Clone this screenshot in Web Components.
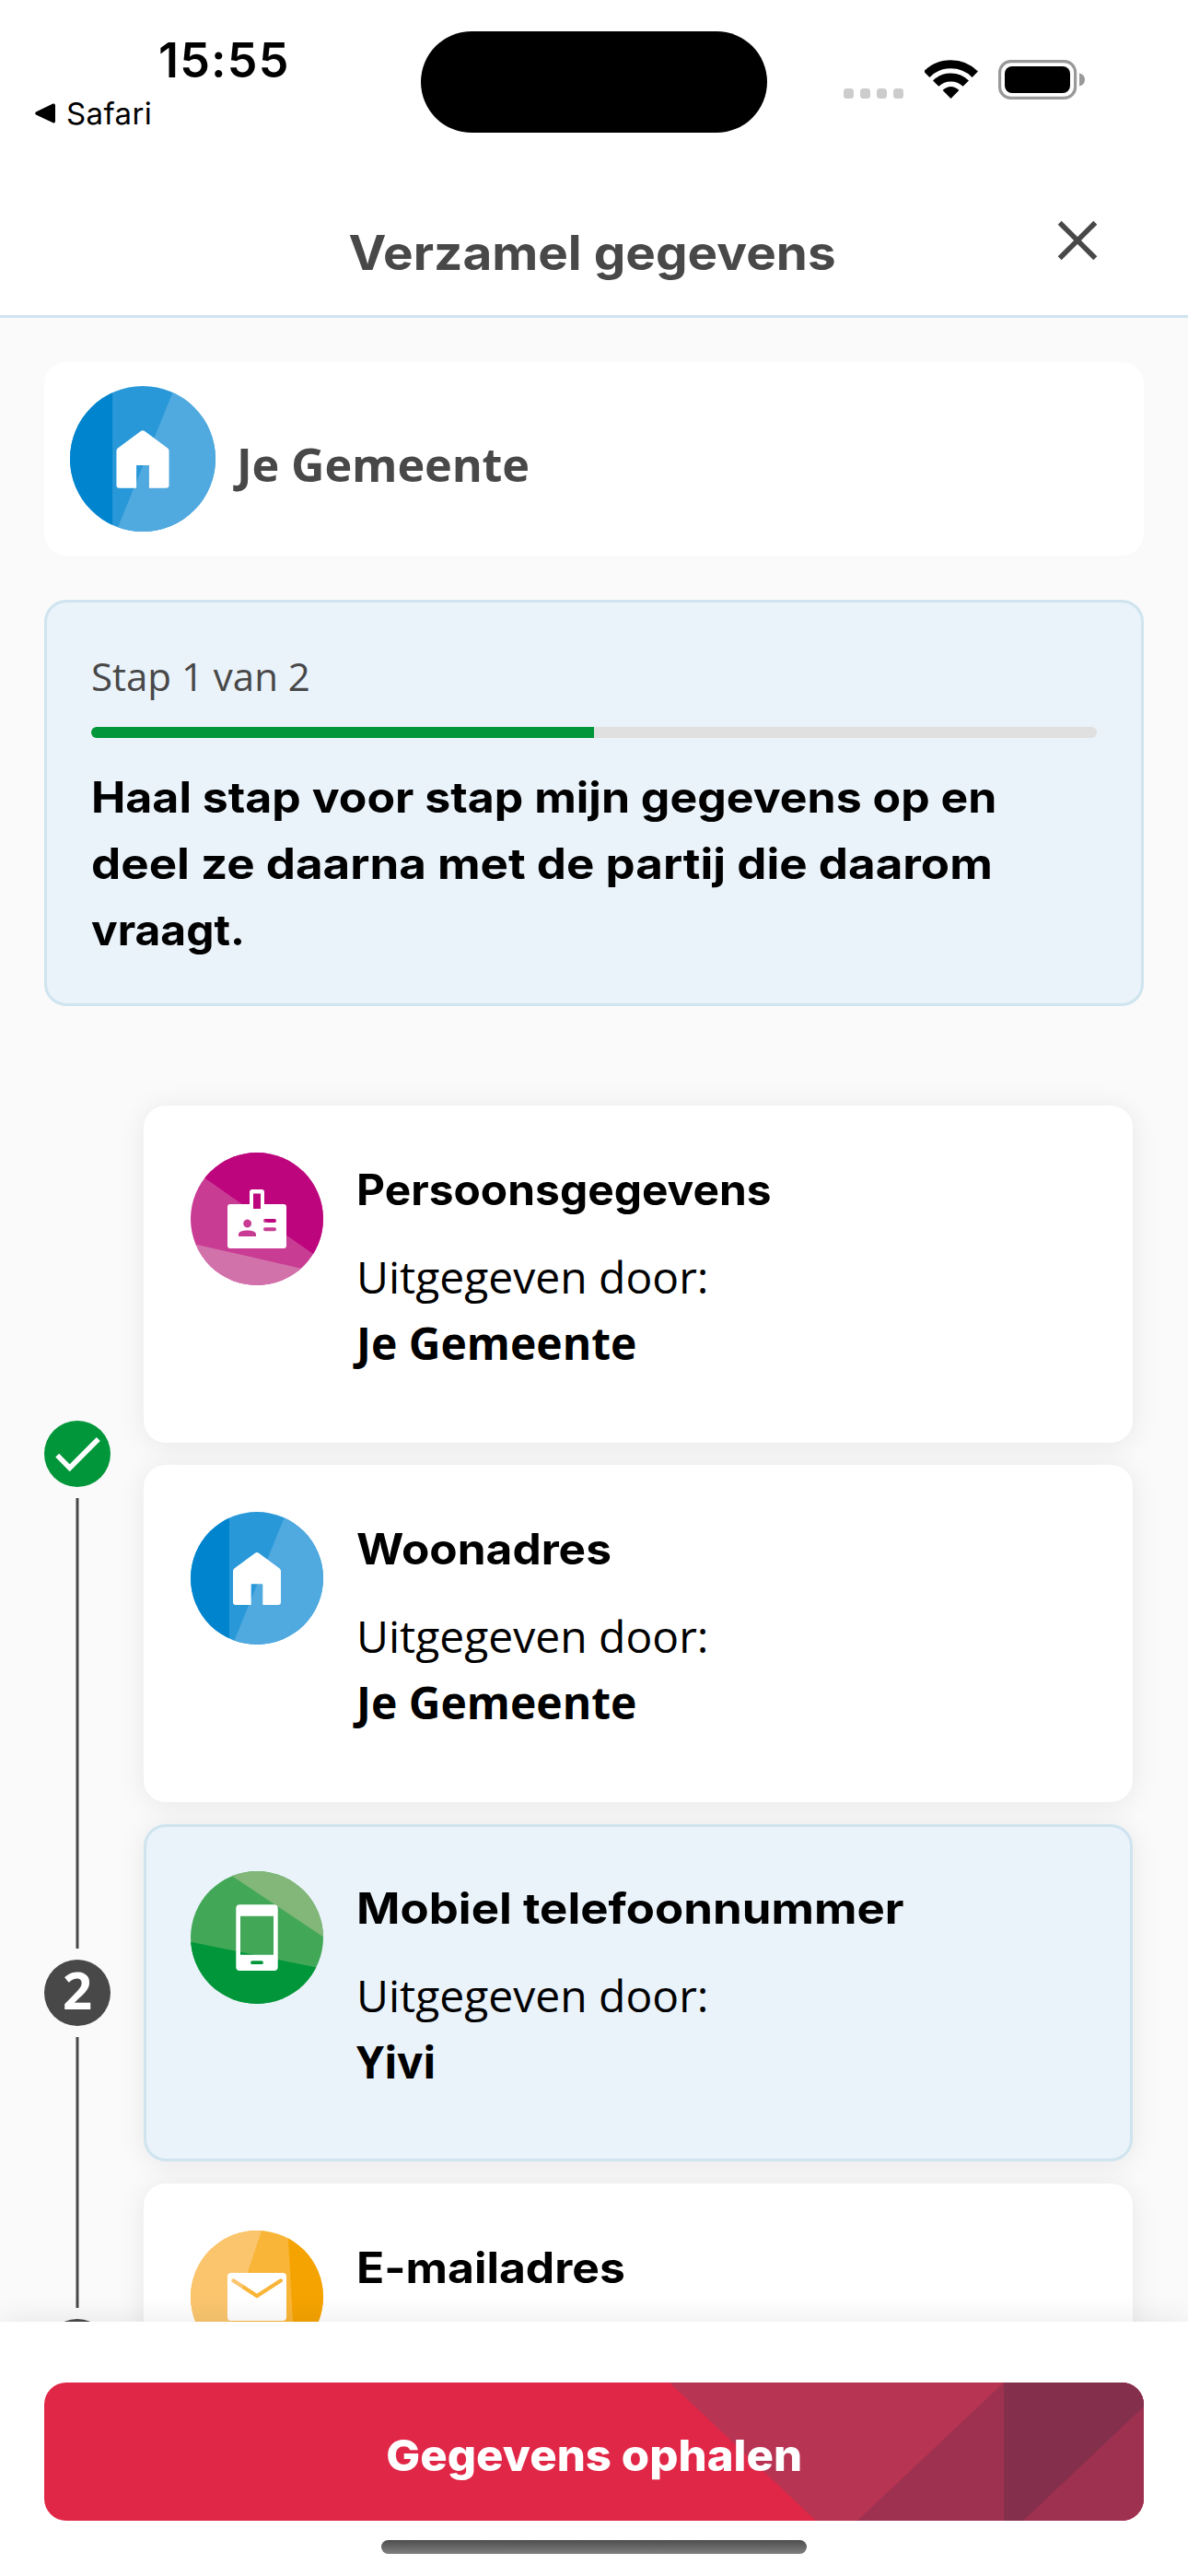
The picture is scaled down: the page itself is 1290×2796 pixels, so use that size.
<!DOCTYPE html>
<html lang="nl">
<head>
<meta charset="utf-8">
<title>Verzamel gegevens</title>
<style>
body { margin: 0; background: #fafafa; }
</style>
</head>
<body>
<yivi-screen>
  <status-bar slot="top" time="15:55" back="Safari"></status-bar>
  <nav-header slot="top">Verzamel gegevens</nav-header>
  <requestor-card>Je Gemeente</requestor-card>
  <progress-panel label="Stap 1 van 2" value="50">
    <span style="transform:scaleX(1.075)">Haal stap voor stap mijn gegevens op en</span>
    <span style="transform:scaleX(1.0985)">deel ze daarna met de partij die daarom</span>
    <span style="transform:scaleX(1.03)">vraagt.</span>
  </progress-panel>
  <step-list>
    <step-item state="done" first>
      <credential-card icon="badge" issuer="Je Gemeente" style="--stretch:1.03">Persoonsgegevens</credential-card>
      <credential-card icon="house" issuer="Je Gemeente" style="--stretch:1.066">Woonadres</credential-card>
    </step-item>
    <step-item number="2">
      <credential-card icon="phone" issuer="Yivi" active style="--stretch:1.096">Mobiel telefoonnummer</credential-card>
    </step-item>
    <step-item>
      <credential-card icon="mail" style="--stretch:1.071">E-mailadres</credential-card>
    </step-item>
  </step-list>
  <action-footer slot="bottom">Gegevens ophalen</action-footer>
</yivi-screen>

<script>
const HEAD = '"Inter", sans-serif';
const BODY = '"Open Sans", sans-serif';

class Base extends HTMLElement {
  connectedCallback() {
    if (this.shadowRoot) return;
    this.attachShadow({ mode: 'open' }).innerHTML =
      `<style>*{box-sizing:border-box}svg{display:block}${this.css()}</style>${this.html()}`;
  }
  css() { return ':host{display:block}'; }
  html() { return '<slot></slot>'; }
}

customElements.define('yivi-screen', class extends Base {
  css() { return `
    :host{display:flex;flex-direction:column;height:2796px;width:1290px;overflow:hidden;background:#fafafa;font-family:${BODY};color:#000}
    main{flex:1;min-height:0;overflow:hidden;padding:48px 48px 0;display:flex;flex-direction:column;gap:48px}
    main ::slotted(*){flex:none}`; }
  html() { return '<slot name="top"></slot><main><slot></slot></main><slot name="bottom"></slot>'; }
});

customElements.define('status-bar', class extends Base {
  css() { return `
    :host{display:grid;grid-template-columns:457px 376px 1fr;align-items:start;height:177px;flex:none;background:#fff;font-family:${HEAD}}
    .left{padding-top:36px;display:flex;flex-direction:column}
    .time{font-size:52px;font-weight:600;line-height:60px;padding-left:172px;letter-spacing:1.2px}
    .back{display:flex;align-items:center;gap:12px;padding-left:38px;margin-top:7px;font-size:33px;line-height:40px;letter-spacing:.4px}
    .island{height:110px;margin-top:34px;border-radius:55px;background:#000}
    .right{display:flex;align-items:flex-end;padding:65px 0 0 83px}`; }
  html() { return `
    <div class="left">
      <div class="time"><span>${this.getAttribute('time')}</span></div>
      <div class="back"><svg width="22" height="22" viewBox="0 0 22 22"><path d="M1 9.6 19.5.6Q22 0 22 2.5V19.5Q22 22 19.5 21.2L1 12.4Q-.6 11 1 9.6Z"/></svg><span>${this.getAttribute('back')}</span></div>
    </div>
    <div class="island"></div>
    <div class="right">
      <svg width="88" height="43" viewBox="0 0 88 43" fill="#ccc"><rect y="31" width="11" height="11" rx="3.5"/><rect x="18" y="31" width="11" height="11" rx="3.5"/><rect x="36" y="31" width="11" height="11" rx="3.5"/><rect x="54" y="31" width="11" height="11" rx="3.5"/></svg>
      <svg width="80" height="43" viewBox="0 0 80 43"><g fill="none" stroke="#000" stroke-width="9"><path d="M2.2 15.7A37.2 37.2 0 0 1 54.8 15.7"/><path d="M12.2 25.7A23 23 0 0 1 44.8 25.7"/></g><path d="M28.5 42 19.6 33.1Q28.5 25 37.4 33.1Z"/></svg>
      <svg width="95" height="43" viewBox="0 0 95 43"><rect x="1.6" y="1.6" width="82" height="39.8" rx="12" fill="none" stroke="#999" stroke-width="3.2"/><rect x="7" y="7" width="71" height="29" rx="8"/><path d="M88 14.5Q94 16 94 21.5T88 28.5Z" fill="#999"/></svg>
    </div>`; }
});

customElements.define('nav-header', class extends Base {
  css() { return `
    :host{display:grid;grid-template-columns:1fr auto 1fr;align-items:start;height:168px;flex:none;background:#fff;border-bottom:3px solid #cfe4ef;box-sizing:border-box;color:#484848;font-family:${HEAD}}
    h1{grid-column:2;margin:62px 3px 0 0;font-size:52px;font-weight:700;line-height:72px;transform:scaleX(1.054)}
    button{grid-column:3;justify-self:end;margin:60px 96px 0 0;padding:0;border:0;background:none}`; }
  html() { return `<h1><slot></slot></h1><button aria-label="Sluiten"><svg width="48" height="48" viewBox="0 0 48 48"><path d="M4.7 4.7 43.3 43.3M43.3 4.7 4.7 43.3" stroke="#484848" stroke-width="5.6" fill="none"/></svg></button>`; }
});

const ART = {
  badge: `<path fill="#c83c93" d="M0 0H144V144H0Z"/><path fill="#bd057e" d="M-5 13 16 28 133 110 144 118V0H-5Z"/><path fill="#d272ab" d="M0 98.4 5.7 99.7 119.7 125.7 144 131.3V144H0Z"/>
    <path fill="#fff" fill-rule="evenodd" d="M67 40H77Q80 40 80 43V56H101Q104 56 104 59V101Q104 104 101 104H43Q40 104 40 101V59Q40 56 43 56H64V43Q64 40 67 40ZM68 44.5H76V61H68ZM61.7 72.6A4.4 4.4 0 1 1 61.6 72.6ZM52 91V88.5C52 83 71 83 71 88.5V91ZM81 72H91A2 2 0 0 1 91 76H81A2 2 0 0 1 81 72ZM81 81.2H91A2 2 0 0 1 91 85.2H81A2 2 0 0 1 81 81.2Z"/>`,
  house: `<path fill="#2998d8" d="M0 0H144V144H0Z"/><path fill="#0084cd" d="M0 0H42V144H0Z"/><path fill="#50a9df" d="M104.2 0 45.7 144H144V0Z"/>
    <path fill="#fff" d="M70 44.7Q72 43.3 74 44.7L96.7 61.6Q98 62.6 98 64.5V98Q98 101 95 101H78.3V78.3H65.7V101H49Q46 101 46 98V64.5Q46 62.6 47.3 61.6Z"/>`,
  phone: `<path fill="#42a858" d="M0 0H144V144H0Z"/><path fill="#82b779" d="M37.2 0 45.7 5.7 144 71.3V0Z"/><path fill="#009639" d="M0 76.7 144 105.9V144H0Z"/>
    <path fill="#fff" fill-rule="evenodd" d="M53.3 36.3H90.7Q94.7 36.3 94.7 40.3V104Q94.7 108 90.7 108H53.3Q49.3 108 49.3 104V40.3Q49.3 36.3 53.3 36.3ZM54 48.7H90V90.7H54ZM67 97.3H77A1.9 1.9 0 0 1 77 101.1H67A1.9 1.9 0 0 1 67 97.3Z"/>`,
  mail: `<path fill="#f9b537" d="M0 0H144V144H0Z"/><path fill="#fac56d" d="M0 0H77L29 144H0Z"/><path fill="#f5a300" d="M105.5 0 113.5 144H144V0Z"/>
    <mask id="m"><rect width="144" height="144" fill="#fff"/><path d="M46.3 54.3 72 71 98 54.3" fill="none" stroke="#000" stroke-width="4" stroke-linecap="round"/></mask>
    <rect x="40" y="46" width="64" height="52" rx="4" fill="#fff" mask="url(#m)"/>`
};

customElements.define('round-icon', class extends Base {
  css() { return `:host{display:block;flex:none;width:144px;height:144px;border-radius:50%;overflow:hidden}svg{width:100%;height:100%}`; }
  html() { return `<svg viewBox="0 0 144 144">${ART[this.getAttribute('name')]}</svg>`; }
});

customElements.define('requestor-card', class extends Base {
  css() { return `
    :host{display:flex;align-items:center;gap:23px;height:210px;box-sizing:border-box;padding:0 28px;border-radius:24px;background:#fff;color:#484848}
    round-icon{width:158px;height:158px}
    b{font-size:50.4px;font-weight:700;line-height:72px;margin-top:12px;letter-spacing:-.15px}`; }
  html() { return `<round-icon name="house"></round-icon><b><slot></slot></b>`; }
});

customElements.define('progress-panel', class extends Base {
  css() { return `
    :host{display:block;height:441px;box-sizing:border-box;padding:48px;border:3px solid #cfe4ef;border-radius:24px;background:#eaf2fa}
    .label{font-size:42px;line-height:63px;color:#484848}
    .bar{margin:24px 0 28px;height:12px;border-radius:6px;background:#e0e0e0;overflow:hidden}
    .fill{height:100%;background:#009639;width:${this.getAttribute('value')}%}
    h2{display:flex;flex-direction:column;align-items:flex-start;margin:0;font:700 46.5px/72px ${HEAD}}
    ::slotted(span){display:block;white-space:nowrap;transform-origin:0 50%}`; }
  html() { return `<div class="label"><span>${this.getAttribute('label')}</span></div><div class="bar"><div class="fill"></div></div><h2><slot></slot></h2>`; }
});

customElements.define('step-list', class extends Base {
  css() { return `:host{display:flex;flex-direction:column;margin-top:48px;padding-right:12px}`; }
});

customElements.define('step-item', class extends Base {
  css() { return `
    :host{display:flex;gap:36px}
    .rail{flex:none;width:72px;display:flex;flex-direction:column;align-items:center;gap:12px}
    .line{flex:1;width:4px;background:#484848;border:solid #a1a1a1;border-width:0 1px}
    :host([first]) .line:first-child{background:none;border-color:transparent}
    .dot{flex:none;width:72px;height:72px;border-radius:50%;background:#484848;color:#fff;font-size:56px;font-weight:700;line-height:65px;text-align:center}
    :host([state=done]) .dot{background:#009639}
    .cards{flex:1;display:flex;flex-direction:column;gap:24px;padding:12px 0}`; }
  html() {
    const inner = this.getAttribute('state') === 'done'
      ? '<svg width="72" height="72" viewBox="0 0 72 72"><path d="M14.2 37.6 27.7 51.2 58.8 20" fill="none" stroke="#fff" stroke-width="5.6"/></svg>'
      : this.getAttribute('number') || '';
    return `<div class="rail"><div class="line"></div><div class="dot">${inner}</div><div class="line"></div></div><div class="cards"><slot></slot></div>`;
  }
});

customElements.define('credential-card', class extends Base {
  css() { return `
    :host{display:flex;gap:36px;height:366px;box-sizing:border-box;padding:48px;border:3px solid #fff;border-radius:24px;background:#fff;box-shadow:0 3px 30px rgba(0,0,0,.08)}
    :host([active]){background:#eaf2fa;border-color:#cfe4ef}
    h3{margin:4px 0 23px;font:700 46.5px/72px ${HEAD};transform:scaleX(var(--stretch,1));transform-origin:0 50%}
    p{margin:0;font-size:48px;line-height:72px}
    b{font-weight:700}`; }
  html() {
    const issuer = this.getAttribute('issuer');
    return `<round-icon name="${this.getAttribute('icon')}"></round-icon><div><h3><slot></slot></h3>${issuer ? `<p><span>Uitgegeven door:</span></p><p><b>${issuer}</b></p>` : ''}</div>`;
  }
});

customElements.define('action-footer', class extends Base {
  css() { return `
    :host{display:flex;flex-direction:column;align-items:center;flex:none;height:276px;box-sizing:border-box;padding:66px 48px 0;background:#fff;position:relative;z-index:1;box-shadow:0 -3px 30px rgba(0,0,0,.08)}
    button{display:grid;place-items:center;width:100%;height:150px;padding:0;border:0;border-radius:24px;overflow:hidden;background:#e12747;color:#fff}
    svg,.t{grid-area:1/1}
    .t{font:800 47px/72px ${HEAD};transform:scaleX(1.045);margin-top:8px;z-index:1}
    .home{width:462px;height:15px;margin-top:21px;border-radius:8px;background:linear-gradient(#4d4d4d,#808080)}`; }
  html() { return `<button><svg width="1194" height="150" viewBox="0 0 1194 150"><path fill="#b73453" d="M679 0H1194V150H838Z"/><path fill="#9e3150" d="M1042 0 883 150H1194V0Z"/><path fill="#842f4c" d="M1042 0H1194V26L1063 150H1042Z"/></svg><span class="t"><slot></slot></span></button><div class="home"></div>`; }
});
</script>
</body>
</html>
